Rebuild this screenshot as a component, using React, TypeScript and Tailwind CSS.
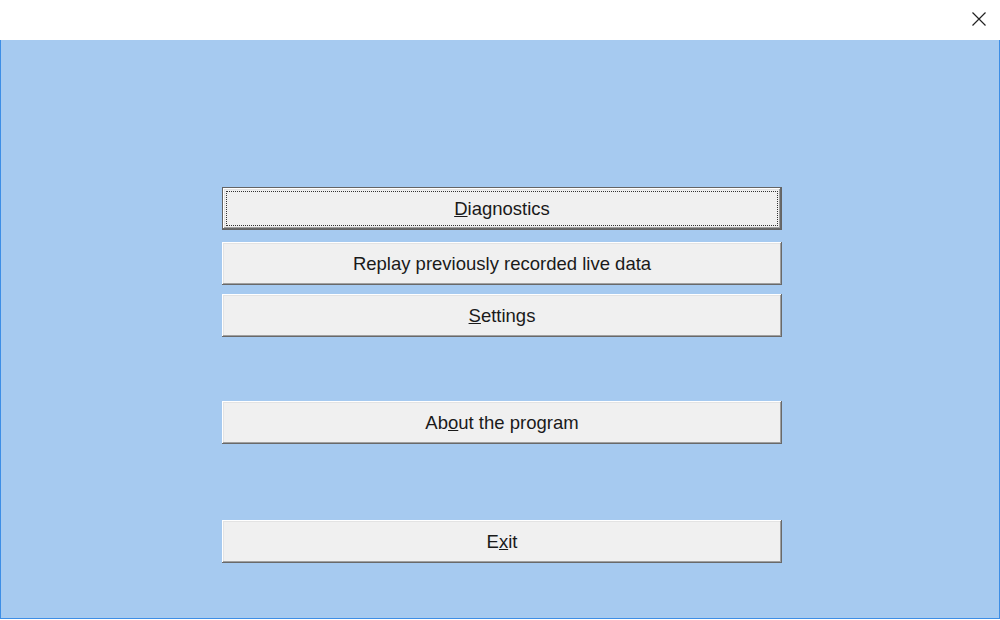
import React from "react";

const btnBase =
  "w-[560px] h-[43px] bg-[#f0f0f0] flex items-center justify-center text-[18.5px] text-[#1a1a1a] pt-[1px] shadow-[inset_-1px_-1px_0_#696969,inset_1px_1px_0_#ffffff,inset_-2px_-2px_0_#a0a0a0,inset_2px_2px_0_#e3e3e3]";

function Btn({ children, className = "" }: { children: React.ReactNode; className?: string }) {
  return <div className={`${btnBase} ${className}`}>{children}</div>;
}

export default function App() {
  return (
    <div
      className="w-[1000px] h-[620px] bg-white flex flex-col overflow-hidden"
      style={{ fontFamily: '"Liberation Sans", Arial, sans-serif' }}
    >
      <div className="h-[40px] flex items-center justify-end pr-[13px] shrink-0">
        <svg width="16" height="16" viewBox="0 0 16 16" className="mt-[-2px]">
          <path d="M1.5 1.5 L14.5 14.5 M14.5 1.5 L1.5 14.5" stroke="#222" strokeWidth="1.2" fill="none" />
        </svg>
      </div>
      <div className="flex-1 bg-[#a6caf0] border-l border-r border-b border-[#3d8ee6] mb-[1px] flex flex-col pl-[221px] pt-[147px]">
        <div className="w-[560px] h-[43px] bg-[#646464] p-[1px]">
          <div className="w-full h-full bg-[#f0f0f0] shadow-[inset_-1px_-1px_0_#696969,inset_1px_1px_0_#ffffff,inset_-2px_-2px_0_#a0a0a0,inset_2px_2px_0_#e3e3e3] p-[3px]">
            <div className="w-full h-full border border-dotted border-[#333] flex items-center justify-center text-[18.5px] text-[#1a1a1a]">
              <span><u>D</u>iagnostics</span>
            </div>
          </div>
        </div>
        <Btn className="mt-[12px]">Replay previously recorded live data</Btn>
        <Btn className="mt-[9px]">
          <span><u>S</u>ettings</span>
        </Btn>
        <Btn className="mt-[64px]">
          <span>Ab<u>o</u>ut the program</span>
        </Btn>
        <Btn className="mt-[76px]">
          <span>E<u>x</u>it</span>
        </Btn>
      </div>
    </div>
  );
}
